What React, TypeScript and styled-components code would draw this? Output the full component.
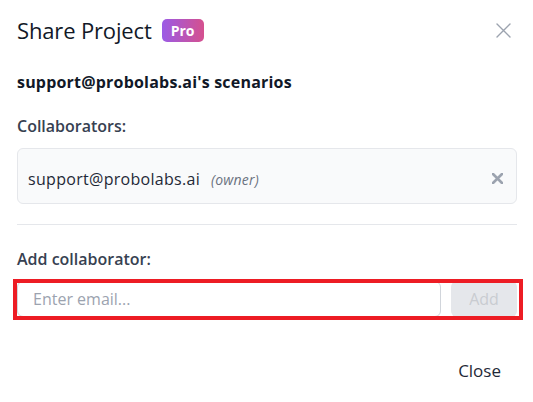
import styled, { createGlobalStyle } from 'styled-components';

const GlobalStyle = createGlobalStyle`
  html, body {
    margin: 0;
    padding: 0;
    background: #ffffff;
  }
  body {
    font-family: 'Open Sans', 'Noto Sans', sans-serif;
    color: #111827;
  }
  * {
    box-sizing: border-box;
  }
`;

const Dialog = styled.div`
  display: flex;
  flex-direction: column;
  width: 533px;
  height: 402px;
  padding: 14px 16px 0 17px;
`;

const Header = styled.div`
  display: flex;
  align-items: center;
  justify-content: space-between;
  height: 32px;
`;

const TitleGroup = styled.div`
  display: flex;
  align-items: center;
  gap: 10px;
`;

const Title = styled.h2`
  margin: 0;
  font-size: 22px;
  line-height: 32px;
  font-weight: 400;
  letter-spacing: -0.15px;
  color: #111827;
`;

const ProBadge = styled.span`
  display: inline-flex;
  align-items: center;
  justify-content: center;
  width: 42px;
  height: 23px;
  border-radius: 5px;
  background: linear-gradient(to right, #9b5be6, #d5508e);
  color: #ffffff;
  font-size: 14px;
  font-weight: 700;
`;

const IconButton = styled.button<{ $right: number }>`
  display: flex;
  align-items: center;
  justify-content: center;
  margin: 0 ${({ $right }) => $right}px 0 0;
  padding: 0;
  border: none;
  background: transparent;
  cursor: pointer;
`;

const Subtitle = styled.h3`
  margin: 24px 0 0;
  font-size: 16px;
  line-height: 24px;
  font-weight: 700;
  letter-spacing: 0.2px;
  color: #111827;
`;

const Label = styled.p<{ $top: number }>`
  margin: ${({ $top }) => $top}px 0 0;
  font-size: 16px;
  line-height: 24px;
  font-weight: 600;
  color: #374151;
`;

const CollaboratorRow = styled.div`
  display: flex;
  align-items: center;
  justify-content: space-between;
  height: 56px;
  margin-top: 10px;
  padding: 5px 13px 0 10px;
  border: 1px solid #e5e7eb;
  border-radius: 6px;
  background: #f9fafb;
`;

const CollaboratorInfo = styled.div`
  display: flex;
  align-items: baseline;
  gap: 11px;
`;

const Email = styled.span`
  font-size: 16px;
  letter-spacing: 0.3px;
  color: #1f2937;
`;

const Role = styled.span`
  font-size: 14px;
  font-style: italic;
  letter-spacing: 0.2px;
  color: #6b7280;
`;

const Divider = styled.hr`
  margin: 20px 0 0;
  border: none;
  border-top: 1px solid #e5e7eb;
`;

const AddRow = styled.div`
  position: relative;
  display: flex;
  gap: 10px;
  height: 36px;
  margin-top: 10px;
  &::after {
    content: '';
    position: absolute;
    top: -2px;
    left: -4px;
    right: -6px;
    bottom: -3px;
    border: 4px solid #ed1c24;
    pointer-events: none;
  }
`;

const EmailInput = styled.input`
  flex: 1;
  height: 100%;
  padding: 0 15px;
  border: 1px solid #d1d5db;
  border-radius: 6px;
  font-family: inherit;
  font-size: 16px;
  color: #111827;
  outline: none;
  &::placeholder {
    color: #9ca3af;
  }
`;

const AddButton = styled.button`
  width: 66px;
  height: 100%;
  border: none;
  border-radius: 6px;
  background: #e5e7eb;
  color: #c9ccd1;
  font-family: inherit;
  font-size: 16px;
  font-weight: 500;
`;

const Footer = styled.div`
  display: flex;
  justify-content: flex-end;
  margin-top: 34px;
`;

const CloseButton = styled.button`
  padding: 8px 16px;
  border: none;
  background: transparent;
  font-family: inherit;
  font-size: 17px;
  line-height: 24px;
  font-weight: 500;
  color: #1f2937;
  cursor: pointer;
`;

const CrossIcon = ({ size, stroke }: { size: number; stroke: number }) => (
  <svg width={size} height={size} viewBox={`0 0 ${size} ${size}`} fill="none">
    <path
      d={`M1 1L${size - 1} ${size - 1}M${size - 1} 1L1 ${size - 1}`}
      stroke="#9ca3af"
      strokeWidth={stroke}
      strokeLinecap="round"
    />
  </svg>
);

const App = () => {
  return (
    <>
      <GlobalStyle />
      <Dialog>
        <Header>
          <TitleGroup>
            <Title>Share Project</Title>
            <ProBadge>Pro</ProBadge>
          </TitleGroup>
          <IconButton $right={6} aria-label="Close dialog">
            <CrossIcon size={15} stroke={1.4} />
          </IconButton>
        </Header>
        <Subtitle>support@probolabs.ai's scenarios</Subtitle>
        <Label $top={20}>Collaborators:</Label>
        <CollaboratorRow>
          <CollaboratorInfo>
            <Email>support@probolabs.ai</Email>
            <Role>(owner)</Role>
          </CollaboratorInfo>
          <IconButton $right={0} aria-label="Remove collaborator">
            <CrossIcon size={11} stroke={2.6} />
          </IconButton>
        </CollaboratorRow>
        <Divider />
        <Label $top={22}>Add collaborator:</Label>
        <AddRow>
          <EmailInput placeholder="Enter email..." />
          <AddButton disabled>Add</AddButton>
        </AddRow>
        <Footer>
          <CloseButton>Close</CloseButton>
        </Footer>
      </Dialog>
    </>
  );
};

export default App;
